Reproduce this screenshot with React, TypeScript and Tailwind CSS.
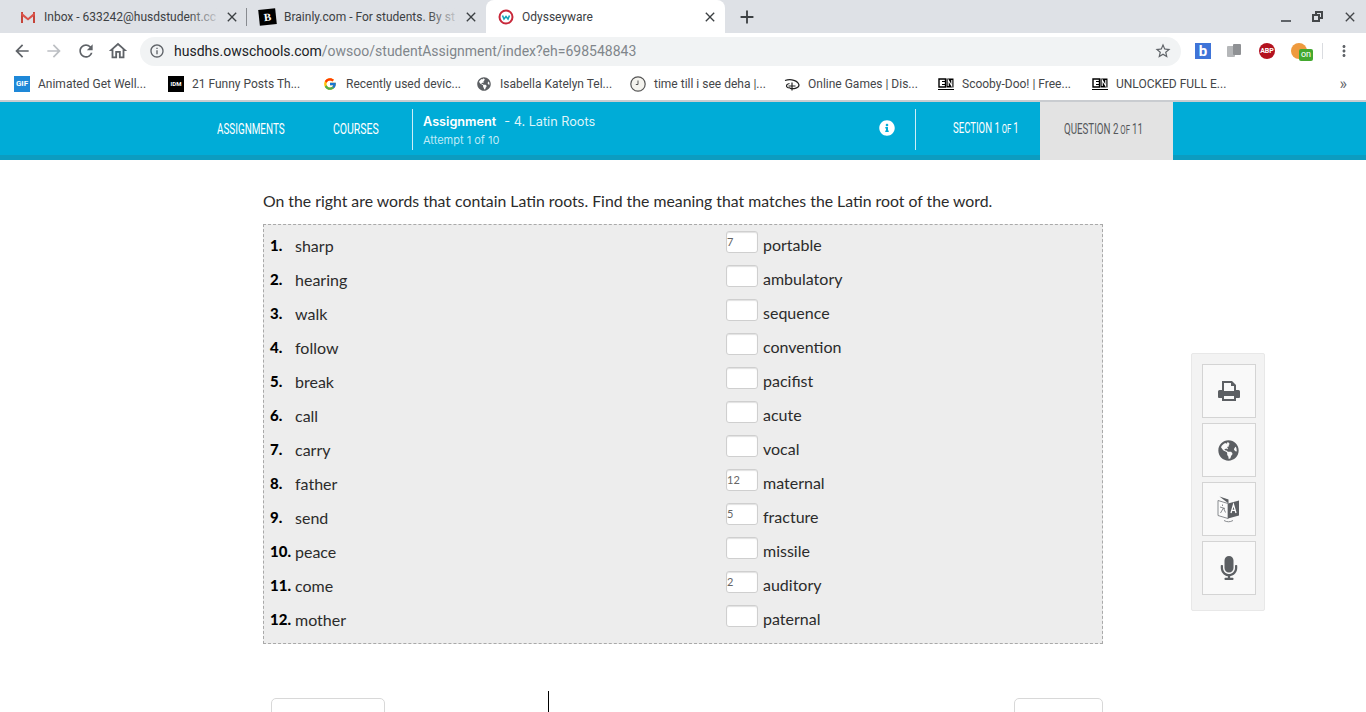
import {
  MdArrowBack,
  MdArrowForward,
  MdRefresh,
  MdOutlineHome,
  MdInfoOutline,
  MdStarBorder,
  MdMoreVert,
  MdClose,
  MdAdd,
} from "react-icons/md";
import { FaGlobeAmericas, FaMicrophone, FaInfoCircle } from "react-icons/fa";
import { FcGoogle } from "react-icons/fc";

const rows = [
  ["sharp", "7", "portable"],
  ["hearing", "", "ambulatory"],
  ["walk", "", "sequence"],
  ["follow", "", "convention"],
  ["break", "", "pacifist"],
  ["call", "", "acute"],
  ["carry", "", "vocal"],
  ["father", "12", "maternal"],
  ["send", "5", "fracture"],
  ["peace", "", "missile"],
  ["come", "2", "auditory"],
  ["mother", "", "paternal"],
];

const GmailIcon = () => (
  <svg width="16" height="16" viewBox="0 0 16 16">
    <path d="M1 3h2v11H1z" fill="#c5443a" />
    <path d="M13 3h2v11h-2z" fill="#c5443a" />
    <path d="M1 3l7 6 7-6v3l-7 5.500L1 6z" fill="#d9534a" />
  </svg>
);

const OdysseyIcon = () => (
  <svg width="16" height="16" viewBox="0 0 16 16">
    <circle cx="8" cy="8" r="6.500" fill="#fff" stroke="#c8283a" strokeWidth="2" />
    <path d="M4.500 6.500l1.500 3.500 2-2.500 2 2.500 1.500-3.500" fill="none" stroke="#16a3b8" strokeWidth="1.600" />
  </svg>
);

const ClockIcon = () => (
  <svg width="16" height="16" viewBox="0 0 16 16">
    <circle cx="8" cy="8" r="7.200" fill="#f4f3ee" stroke="#555" strokeWidth="1.200" />
    <path d="M8 4.500V8.500H5.800" fill="none" stroke="#555" />
  </svg>
);

const DisneyIcon = () => (
  <svg width="16" height="16" viewBox="0 0 16 16" fill="none" stroke="#222" strokeWidth="1.200">
    <path d="M1 4.500c6-2 13 0 14 4.500 0 3-5 4-9 3.500" />
    <path d="M5.500 7.500c-3 .5-4 2.500-2 4 1 .5 2 .5 3 .3" />
    <path d="M8 6.500v8M4.500 10h7" />
  </svg>
);

const CnIcon = () => (
  <svg width="16" height="12" viewBox="0 0 16 12">
    <path d="M1 1h6.500v8H1z" fill="none" stroke="#000" strokeWidth="1.400" />
    <path d="M4 3.500H7M4 6.500H7" stroke="#000" strokeWidth="1.200" />
    <path d="M8.500 .5h7v9h-7z" fill="#000" />
    <path d="M10.200 8V2l3.600 6V2" fill="none" stroke="#fff" strokeWidth="1.100" />
    <path d="M0 11.500h16" stroke="#000" />
  </svg>
);

const PrintIcon = () => (
  <svg width="24" height="22" viewBox="0 0 24 22">
    <path
      fillRule="evenodd"
      d="M5 1h10l4 4v5h2.500A1.500 1.500 0 0 1 23 11.500V17a1 1 0 0 1-1 1h-3v3H5v-3H2a1 1 0 0 1-1-1v-5.500A1.500 1.500 0 0 1 2.500 10H5zM7 3v8h10V6h-3V3zM7 16v3h10v-3z"
      fill="#5c5f63"
    />
  </svg>
);

const TranslateIcon = () => (
  <svg width="23" height="27" viewBox="0 0 23 27">
    <path d="M1 4.500l10 3v15l-10-3z" fill="#fbfbfb" stroke="#7c7f83" strokeWidth="0.900" />
    <path d="M2.500 .5l9 3v4z" fill="#5c5f63" />
    <path d="M11 7.500l11-3v15l-11 3z" fill="#5c5f63" />
    <path d="M14 17l2.500-8.500 2.500 8.500M15 14.300h3" fill="none" stroke="#fff" strokeWidth="1.300" />
    <path d="M5.500 8.500v1.500M3 11l5 1.500M3.500 17l3-5 2 4.500" fill="none" stroke="#7c7f83" strokeWidth="0.900" />
    <path d="M7 24.500c3 1.700 6 1.700 9 0" fill="none" stroke="#7c7f83" strokeWidth="0.900" />
  </svg>
);

const Tab = ({
  icon,
  title,
  active,
  separator,
  iconBox = "w-[24px]",
}: {
  icon: React.ReactNode;
  title: string;
  active?: boolean;
  separator?: boolean;
  iconBox?: string;
}) => (
  <div
    className={`relative flex h-[33px] w-[239px] shrink-0 items-center pr-[7px] pl-[12px] ${
      active ? "rounded-t-[8px] bg-white" : ""
    }`}
  >
    <span className={`flex shrink-0 items-center ${iconBox}`}>{icon}</span>
    <span className="relative min-w-0 flex-1 text-[12px] whitespace-nowrap text-[#3c4043]">
      {title}
      {!active && (
        <span className="absolute top-0 right-0 bottom-0 w-[34px] bg-gradient-to-r from-transparent to-[#dee1e6]" />
      )}
    </span>
    <MdClose className="ml-[2px] shrink-0 text-[#3c4043]" size={16} />
    {separator && <span className="absolute top-[8px] right-[0px] h-[18px] w-px bg-[#888b90]" />}
  </div>
);

const Bookmark = ({ icon, title }: { icon: React.ReactNode; title: string }) => (
  <div className="flex w-[154px] shrink-0 items-center gap-[8px] text-[12px] whitespace-nowrap text-[#444649]">
    <span className="flex w-[16px] shrink-0 items-center justify-center">{icon}</span>
    {title}
  </div>
);

const ToolButton = ({ children }: { children: React.ReactNode }) => (
  <div className="flex h-[54px] w-[54px] items-center justify-center border border-[#d4d4d4] bg-[#f9f9f9] text-[#5c5f63]">
    {children}
  </div>
);

export default function App() {
  return (
    <div className="relative flex h-[712px] w-[1366px] flex-col overflow-hidden bg-white font-['Roboto',sans-serif]">
      {/* tab strip */}
      <div className="flex h-[33px] shrink-0 items-center bg-[#dee1e6] pl-[8px]">
        <Tab icon={<GmailIcon />} title="Inbox - 633242@husdstudent.cc" separator />
        <Tab
          icon={
            <span className="flex h-[16px] w-[17px] -rotate-6 items-center justify-center bg-black font-['Liberation_Serif',serif] text-[11px] font-bold text-white">
              B
            </span>
          }
          iconBox="w-[25px]"
          title="Brainly.com - For students. By st"
        />
        <Tab icon={<OdysseyIcon />} title="Odysseyware" active />
        <MdAdd className="ml-[11px] text-[#3c4043]" size={22} />
        <div className="ml-auto flex items-center pr-[8px] text-[#44474a]">
          <span className="mt-[8px] h-[2px] w-[10px] bg-[#5f6368]" />
          <span className="relative ml-[21px] h-[11px] w-[11px]">
            <span className="absolute top-0 right-0 h-[8px] w-[8px] border-2 border-[#44474a]" />
            <span className="absolute bottom-0 left-0 h-[8px] w-[8px] border-2 border-[#44474a] bg-[#dee1e6]" />
          </span>
          <MdClose size={16} className="ml-[19px]" />
        </div>
      </div>

      {/* toolbar */}
      <div className="flex h-[34px] shrink-0 items-center bg-white pt-[2px] pr-[12px] pl-[12px]">
        <MdArrowBack size={20} className="text-[#5f6368]" />
        <MdArrowForward size={20} className="ml-[12px] text-[#bcbfc3]" />
        <MdRefresh size={20} className="ml-[12px] text-[#5f6368]" />
        <MdOutlineHome size={22} className="ml-[11px] text-[#5f6368]" />
        <div className="ml-[11px] flex h-[29px] w-[1041px] shrink-0 items-center rounded-full bg-[#f1f3f4] pr-[9px] pl-[9px]">
          <MdInfoOutline size={16} className="text-[#5f6368]" />
          <span className="ml-[9px] text-[14px] text-[#202124]">
            husdhs.owschools.com<span className="text-[#80868b]">/owsoo/studentAssignment/index?eh=698548843</span>
          </span>
          <MdStarBorder size={18} className="ml-auto text-[#5f6368]" />
        </div>
        <div className="ml-[14px] flex h-[16px] w-[16px] items-center justify-center bg-[#3f74d8] text-[15px] leading-none font-bold text-white">
          b
        </div>
        <div className="relative ml-[16px] h-[14px] w-[14px]">
          <span className="absolute top-[2px] left-0 h-[11px] w-[8px] rounded-[1px] bg-[#b5b7b9]" />
          <span className="absolute top-0 right-0 h-[11px] w-[8px] rounded-[1px] bg-[#8f9194]" />
        </div>
        <div className="ml-[18px] flex h-[16px] w-[16px] items-center justify-center rounded-full bg-[#b3121f] text-[7px] font-bold text-white">
          ABP
        </div>
        <div className="relative ml-[16px] h-[16px] w-[16px] rounded-full bg-[#ee9a3e]">
          <span className="absolute top-[6px] left-[8px] flex h-[12px] w-[14px] items-center justify-center rounded-[2px] bg-[#43a82f] text-[9px] text-white">
            on
          </span>
        </div>
        <span className="ml-[15px] h-[16px] w-px bg-[#dadce0]" />
        <MdMoreVert size={18} className="ml-[12px] text-[#5f6368]" />
      </div>

      {/* bookmarks */}
      <div className="flex h-[33px] shrink-0 items-center bg-white pl-[14px]">
        <Bookmark
          icon={
            <span className="flex h-[16px] w-[16px] items-center justify-center bg-[#1e88d8] text-[8px] font-bold text-white">
              GIF
            </span>
          }
          title="Animated Get Well..."
        />
        <Bookmark
          icon={
            <span className="flex h-[16px] w-[16px] items-center justify-center bg-black text-[6px] font-bold text-white">
              IDM
            </span>
          }
          title="21 Funny Posts Th..."
        />
        <Bookmark icon={<FcGoogle size={14} />} title="Recently used devic..." />
        <Bookmark icon={<FaGlobeAmericas size={14} className="text-[#5c5f63]" />} title="Isabella Katelyn Tel..." />
        <Bookmark icon={<ClockIcon />} title="time till i see deha |..." />
        <Bookmark icon={<DisneyIcon />} title="Online Games | Dis..." />
        <Bookmark icon={<CnIcon />} title="Scooby-Doo! | Free..." />
        <Bookmark icon={<CnIcon />} title="UNLOCKED FULL E..." />
        <span className="absolute right-[19px] text-[16px] leading-none text-[#5f6368]">»</span>
      </div>

      {/* odysseyware nav */}
      <div className="h-[2px] shrink-0 bg-[#c9ccd0]" />
      <div className="flex h-[58px] shrink-0 border-b-[5px] border-[#0c9cc0] bg-[#00acd7] pl-[217px] text-[15px] text-white">
        <div className="flex items-center gap-[48px] pt-[1px]">
          <span className="inline-block w-[68px] origin-left scale-x-[0.66] whitespace-nowrap">ASSIGNMENTS</span>
          <span className="inline-block w-[45px] origin-left scale-x-[0.70] whitespace-nowrap">COURSES</span>
        </div>
        <div className="mt-[7px] ml-[34px] h-[41px] w-px bg-white/80" />
        <div className="ml-[10px] flex w-[171px] flex-col pt-[11px] font-['Inter',sans-serif] whitespace-nowrap">
          <div className="text-[12.700px] leading-[18px] text-[#dff4fa]">
            <span className="font-semibold text-white">Assignment</span>
            <span className="ml-[8px]">- 4. Latin Roots</span>
          </div>
          <div className="text-[11px] leading-[18px] text-[#bfeaf6]">Attempt 1 of 10</div>
        </div>
        <FaInfoCircle size={16} className="mt-[18px] ml-[285px] text-white" />
        <div className="mt-[7px] ml-[20px] h-[41px] w-px bg-white/80" />
        <div className="ml-[37px] flex w-[64px] items-center pb-[1px]">
          <span className="inline-block origin-left scale-x-[0.64] whitespace-nowrap">
            SECTION 1<span className="ml-[3px] text-[12px]">OF</span>
            <span className="ml-[3px]">1</span>
          </span>
        </div>
        <div className="ml-[23px] -mb-[5px] flex h-[58px] w-[133px] items-center bg-[#e3e3e3] pb-[3px] pl-[24px] text-[#55585b]">
          <span className="inline-block origin-left scale-x-[0.65] whitespace-nowrap">
            QUESTION 2<span className="ml-[3px] text-[12px]">OF</span>
            <span className="ml-[3px]">11</span>
          </span>
        </div>
      </div>

      {/* assignment */}
      <div className="mx-auto w-[840px] pt-[31px] font-['Lato',sans-serif] text-[#2b2b2b]">
        <p className="text-[15.800px] leading-[20px]">
          On the right are words that contain Latin roots. Find the meaning that matches the Latin root of the word.
        </p>
        <div className="mt-[13px] border border-dashed border-[#a9a9a9] bg-[#ededed] pt-[5px] pb-[5px]">
          {rows.map(([word, answer, term], i) => (
            <div key={term} className="flex h-[34px]">
              <div className="flex w-[462px] shrink-0 items-center pb-[3px]">
                <span className="ml-[6px] w-[25px] text-[15px] font-black text-black">{i + 1}.</span>
                <span className="text-[16px]">{word}</span>
              </div>
              <div className="flex items-start pt-[1px]">
                <input
                  readOnly
                  value={answer}
                  className="h-[22px] w-[32px] rounded-[3px] border border-[#cfcfcf] bg-white px-0 pb-[2px] text-[11px] text-[#666] shadow-[inset_0_1px_1px_rgba(0,0,0,0.12)] outline-none"
                />
                <span className="ml-[5px] pt-[2px] text-[16px]">{term}</span>
              </div>
            </div>
          ))}
        </div>
        <div className="mt-[54px] flex justify-between pr-0 pl-[8px]">
          <div className="h-[40px] w-[114px] rounded-[5px] border border-[#d8d8d8] bg-white" />
          <div className="h-[40px] w-[89px] rounded-[5px] border border-[#d8d8d8] bg-white" />
        </div>
      </div>

      {/* floating tools */}
      <div className="absolute top-[353px] left-[1191px] flex h-[258px] w-[74px] flex-col items-center gap-[5px] rounded-[2px] border border-[#e8e8e8] bg-[#f3f3f3] pt-[10px] pl-[1px]">
        <ToolButton>
          <PrintIcon />
        </ToolButton>
        <ToolButton>
          <FaGlobeAmericas size={21} />
        </ToolButton>
        <ToolButton>
          <TranslateIcon />
        </ToolButton>
        <ToolButton>
          <FaMicrophone size={24} />
        </ToolButton>
      </div>

      {/* text caret */}
      <div className="absolute top-[691px] left-[548px] h-[21px] w-px bg-black" />
    </div>
  );
}
